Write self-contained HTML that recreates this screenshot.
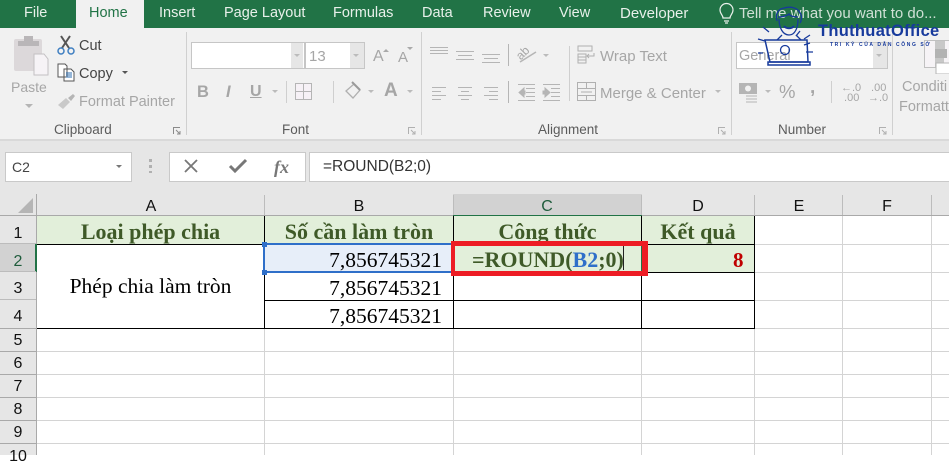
<!DOCTYPE html>
<html><head><meta charset="utf-8">
<style>
html,body{margin:0;padding:0}
body{width:949px;height:455px;overflow:hidden;position:relative;background:#fff;font-family:"Liberation Sans",sans-serif}
.a{position:absolute}
.t{position:absolute;white-space:nowrap;line-height:1}
.tab{top:6px;font-size:14.5px;color:#e8f0ea}
.g{color:#a6a6a6;font-size:14px}
.lbl{color:#5c5c5c;font-size:13.5px;top:123px}
.s{font-family:"Liberation Serif","Noto Serif CJK SC",serif;font-size:21px}
.hd{font-weight:bold;color:#3f5a28;font-size:22px;top:221px;text-align:center}
.num{color:#000;font-size:21.5px;text-align:right;width:180px;left:262px}
.col{top:199px;font-size:16px;color:#111;width:40px;text-align:center}
.row{left:0;width:36px;text-align:center;font-size:16px;color:#111}
</style></head><body>
<div class="a" style="left:0;top:0;width:949px;height:28px;background:#217346"></div>
<div class="a" style="left:76px;top:0;width:68px;height:28px;background:#f1f1f1"></div>
<div class="t tab" style="left:24px">File</div>
<div class="t tab" style="left:89px;color:#217346">Home</div>
<div class="t tab" style="left:159px">Insert</div>
<div class="t tab" style="left:224px">Page Layout</div>
<div class="t tab" style="left:333px">Formulas</div>
<div class="t tab" style="left:422px">Data</div>
<div class="t tab" style="left:483px">Review</div>
<div class="t tab" style="left:559px">View</div>
<div class="t tab" style="left:620px;font-size:15px">Developer</div>
<div class="t tab" style="left:739px;color:#cfe0d5;font-size:15px">Tell me what you want to do...</div>
<svg class="a" style="left:718px;top:2px" width="18" height="24" viewBox="0 0 18 24"><path d="M5 16c0-3-3-4-3-8a6.500 6.500 0 0 1 13 0c0 4-3 5-3 8zM6 19h5M7 21h3" fill="none" stroke="#e8f0ea" stroke-width="1.200"/></svg>

<!-- ribbon -->
<div class="a" style="left:0;top:28px;width:949px;height:111px;background:#f1f1f1"></div>
<div class="a" style="left:0;top:139px;width:949px;height:2px;background:#d9d9d9"></div>
<div class="a" style="left:0;top:141px;width:949px;height:53px;background:#e6e6e6"></div>
<div class="a" style="left:186px;top:32px;width:1px;height:103px;background:#d0d0d0"></div>
<div class="a" style="left:421px;top:32px;width:1px;height:103px;background:#d0d0d0"></div>
<div class="a" style="left:731px;top:32px;width:1px;height:103px;background:#d0d0d0"></div>
<div class="a" style="left:892px;top:32px;width:1px;height:103px;background:#d0d0d0"></div>

<!-- clipboard -->
<svg class="a" style="left:12px;top:34px" width="38" height="42" viewBox="0 0 38 42"><rect x="2" y="5" width="28" height="32" rx="2" fill="#dcd8da"/><rect x="12" y="2" width="9" height="6" fill="#b9b6b8"/><rect x="6" y="7" width="21" height="5" fill="#b9b6b8"/><path d="M22 20h10l4 5v16H22z" fill="#f6f3f6" stroke="#c3c0c3"/></svg>
<div class="t g" style="left:11px;top:80px;font-size:14px">Paste</div>
<div class="a" style="left:25px;top:104px;border:4px solid transparent;border-top-color:#b5b5b5"></div>
<svg class="a" style="left:56px;top:35px" width="20" height="20" viewBox="0 0 20 20"><path d="M5 1l8 12M14 1L6 13" stroke="#555" stroke-width="2" fill="none"/><circle cx="5" cy="16" r="3" fill="none" stroke="#3f7fc1" stroke-width="1.500"/><circle cx="15" cy="16" r="3" fill="none" stroke="#3f7fc1" stroke-width="1.500"/></svg>
<div class="t" style="left:79px;top:39px;font-size:14.500px;color:#444">Cut</div>
<svg class="a" style="left:57px;top:63px" width="18" height="19" viewBox="0 0 18 19"><path d="M1 1h7l2 2v11H1zM7 6h7l3 3v9H7z" fill="#fff" stroke="#555"/><path d="M9 10h6M9 12h6M9 14h6" stroke="#2b6cb0"/></svg>
<div class="t" style="left:79px;top:67px;font-size:14.500px;color:#444">Copy</div>
<div class="a" style="left:122px;top:71px;border:3.500px solid transparent;border-top-color:#555"></div>
<svg class="a" style="left:57px;top:93px" width="19" height="17" viewBox="0 0 19 17"><path d="M1 12l8-7 4 4-7 7z" fill="#c9c9c9"/><path d="M11 5l5-4 2 2-4 5z" fill="#b5b5b5"/></svg>
<div class="t g" style="left:79px;top:95px;font-size:14.500px">Format Painter</div>
<div class="t lbl" style="left:54px">Clipboard</div>
<svg class="a" style="left:173px;top:127px" width="8" height="8"><path d="M0.500 7V0.500H7M3 3l4 4M7 4v3H4" fill="none" stroke="#8a8a8a"/></svg>

<!-- font -->
<div class="a" style="left:191px;top:42px;width:112px;height:25px;border:1px solid #c6c6c6;background:#fff;box-sizing:content-box"></div>
<div class="a" style="left:291px;top:43px;width:12px;height:25px;background:#e6e6e6"></div>
<div class="a" style="left:294px;top:54px;border:3.500px solid transparent;border-top-color:#bbb"></div>
<div class="a" style="left:305px;top:42px;width:58px;height:25px;border:1px solid #c6c6c6;background:#fff"></div>
<div class="a" style="left:350px;top:43px;width:14px;height:25px;background:#e6e6e6"></div>
<div class="a" style="left:353px;top:54px;border:3.500px solid transparent;border-top-color:#bbb"></div>
<div class="t g" style="left:309px;top:49px;font-size:15px">13</div>
<div class="t" style="left:373px;top:49px;font-size:16px;color:#a6a6a6">A</div>
<div class="a" style="left:383px;top:46px;border:3px solid transparent;border-bottom-color:#aaa"></div>
<div class="t" style="left:398px;top:50px;font-size:15px;color:#a6a6a6">A</div>
<div class="a" style="left:407px;top:47px;border:3px solid transparent;border-top-color:#aaa"></div>
<div class="t" style="left:197px;top:84px;font-size:16.500px;font-weight:bold;color:#a6a6a6">B</div>
<div class="t" style="left:226px;top:84px;font-size:16.500px;font-weight:bold;font-style:italic;color:#a6a6a6">I</div>
<div class="t" style="left:250px;top:84px;font-size:16px;font-weight:bold;color:#a6a6a6;text-decoration:underline">U</div>
<div class="a" style="left:272px;top:90px;border:3px solid transparent;border-top-color:#bbb"></div>
<div class="a" style="left:286px;top:81px;width:1px;height:22px;background:#cfcfcf"></div>
<svg class="a" style="left:295px;top:83px" width="17" height="17"><path d="M0.500 0.500h16v16h-16zM8.500 0.500v16M0.500 8.500h16" fill="#f6f1f6" stroke="#b5b5b5"/></svg>
<div class="a" style="left:333px;top:81px;width:1px;height:22px;background:#cfcfcf"></div>
<svg class="a" style="left:344px;top:81px" width="20" height="20"><path d="M2 10l8-7 6 6-7 8z" fill="none" stroke="#b0b0b0" stroke-width="1.300"/><path d="M8 1l8 8" stroke="#9a9a9a" stroke-width="2"/></svg>
<div class="a" style="left:368px;top:90px;border:3px solid transparent;border-top-color:#bbb"></div>
<div class="t" style="left:384px;top:81px;font-size:19px;font-weight:bold;color:#a6a6a6">A</div>
<div class="a" style="left:407px;top:90px;border:3px solid transparent;border-top-color:#bbb"></div>
<div class="t lbl" style="left:282px">Font</div>
<svg class="a" style="left:408px;top:127px" width="8" height="8"><path d="M0.500 7V0.500H7M3 3l4 4M7 4v3H4" fill="none" stroke="#b0b0b0"/></svg>

<!-- alignment -->
<svg class="a" style="left:428px;top:44px" width="160" height="62" fill="none" stroke="#b5b5b5">
<path d="M2 3.500h18M2 6.500h18M2 9.500h18"/>
<path d="M28 7.500h18M30 11.500h14M28 15.500h18"/>
<path d="M54 10.500h18M56 14.500h14M54 18.500h18"/>
<path d="M4 43.500h14M4 47.500h9M4 51.500h14M4 55.500h9"/>
<path d="M30 43.500h14M33 47.500h8M30 51.500h14M33 55.500h8"/>
<path d="M56 43.500h14M61 47.500h9M56 51.500h14M61 55.500h9"/>
<path d="M80.500 0v22M80.500 37v22"/>
<path d="M92 18L108 8" stroke-width="1.500"/>
<path d="M90 40.500h17M98 44.500h9M98 48.500h9M98 52.500h9M90 56.500h17"/>
<path d="M96 44l-5 4.500 5 4.500v-3h1v-3h-1z" fill="#b5b5b5"/>
<path d="M115 40.500h17M123 44.500h9M123 48.500h9M123 52.500h9M115 56.500h17"/>
<path d="M117 44l5 4.500-5 4.500v-3h-2v-3h2z" fill="#b5b5b5"/>
</svg>
<div class="t" style="left:516px;top:47px;font-size:12px;color:#a6a6a6;transform:rotate(-45deg);transform-origin:50% 50%">ab</div>
<div class="a" style="left:543px;top:54px;border:3px solid transparent;border-top-color:#bbb"></div>
<div class="a" style="left:569px;top:46px;width:1px;height:55px;background:#cfcfcf"></div>
<svg class="a" style="left:577px;top:45px" width="20" height="20" fill="none" stroke="#b0b0b0"><path d="M1 1h14v5H1zM1 9h8v9H1zM1 12h8M1 15h8M10 11h7v-3M12 9l-2 2 2 2"/></svg>
<div class="t g" style="left:600px;top:49px;font-size:15px">Wrap Text</div>
<svg class="a" style="left:577px;top:82px" width="20" height="20" fill="none" stroke="#b0b0b0"><path d="M0.500 0.500h18v18h-18zM0.500 6.500h18M0.500 13.500h18M9.500 0.500v6M9.500 13.500v5M4 10h11"/></svg>
<div class="t g" style="left:600px;top:86px;font-size:15px">Merge &amp; Center</div>
<div class="a" style="left:715px;top:90px;border:3px solid transparent;border-top-color:#bbb"></div>
<div class="t lbl" style="left:538px">Alignment</div>
<svg class="a" style="left:718px;top:127px" width="8" height="8"><path d="M0.500 7V0.500H7M3 3l4 4M7 4v3H4" fill="none" stroke="#b0b0b0"/></svg>

<!-- number -->
<div class="a" style="left:736px;top:42px;width:150px;height:25px;border:1px solid #c6c6c6;background:#fff"></div>
<div class="a" style="left:873px;top:43px;width:14px;height:25px;background:#e6e6e6"></div>
<div class="a" style="left:876px;top:54px;border:3.500px solid transparent;border-top-color:#bbb"></div>
<div class="t g" style="left:739px;top:49px;font-size:14.500px">General</div>
<svg class="a" style="left:739px;top:83px" width="20" height="20"><rect x="0" y="0" width="18" height="11" fill="#b5b5b5"/><ellipse cx="9" cy="5.500" rx="3" ry="3" fill="#f1f1f1"/><path d="M7 13h11M7 16h11M7 19h11" stroke="#b5b5b5"/></svg>
<div class="a" style="left:765px;top:90px;border:3px solid transparent;border-top-color:#bbb"></div>
<div class="t" style="left:779px;top:83px;font-size:18.500px;color:#a6a6a6">%</div>
<div class="t" style="left:810px;top:78px;font-size:19px;font-weight:bold;color:#a6a6a6">,</div>
<div class="a" style="left:831px;top:81px;width:1px;height:22px;background:#cfcfcf"></div>
<div class="t" style="left:841px;top:83px;font-size:11px;color:#a6a6a6;line-height:10px;white-space:pre">←.0
 .00</div>
<div class="t" style="left:868px;top:83px;font-size:11px;color:#a6a6a6;line-height:10px;white-space:pre"> .00
→.0</div>
<div class="t lbl" style="left:778px">Number</div>
<svg class="a" style="left:879px;top:127px" width="8" height="8"><path d="M0.500 7V0.500H7M3 3l4 4M7 4v3H4" fill="none" stroke="#b0b0b0"/></svg>

<!-- styles -->
<svg class="a" style="left:924px;top:40px" width="25" height="34"><path d="M0.500 0.500h30v27h-30z" fill="#f6f3f6" stroke="#c0c0c0"/><rect x="11" y="1" width="10" height="8" fill="#c8c8c8"/><rect x="11" y="9" width="12" height="9" fill="#b3b3b3"/><rect x="11" y="18" width="9" height="9" fill="#c8c8c8"/><rect x="12" y="23" width="14" height="11" fill="#fff" stroke="#b5b5b5"/></svg>
<div class="t g" style="left:902px;top:80px;font-size:14.500px">Conditi</div>
<div class="t g" style="left:899px;top:100px;font-size:14.500px">Formatt</div>

<!-- watermark -->
<svg class="a" style="left:755px;top:5px" width="100" height="62" fill="none" stroke="#173a9c" stroke-width="1.300">
<path d="M22 16c-2-7 1-12 7-13 7-2 14 0 16 5 2 2 2 7 0 10M23 12c4 0 9-1 11-3 1 2 5 3 9 3M24 14c0 9 4 16 10 16s9-7 9-16"/>
<path d="M29 21c2 3 8 3 10 0" stroke-width="2"/>
<path d="M27 30l-5 5M41 30l5 5"/>
<path d="M8 22l6 5M3 34l7 2M45 26l-4 5M55 30l-6 4M55 38l-6 2M51 47h7M3 48h5"/>
<path d="M10 35h42l1 22H15z" stroke-width="1.500"/>
<path d="M13 57h42v3H13z" stroke-width="1.500"/>
<circle cx="30" cy="45" r="4.500"/>
</svg>
<div class="t" style="left:818px;top:23px;font-size:16.500px;font-weight:bold;color:#173a9c;letter-spacing:.3px">ThuthuatOffice</div>
<div class="t" style="left:830px;top:43px;font-size:5px;font-weight:bold;color:#173a9c;letter-spacing:1.600px">TRI KỶ CỦA DÂN CÔNG SỞ</div>

<!-- formula bar -->
<div class="a" style="left:5px;top:152px;width:125px;height:28px;border:1px solid #c9c9c9;background:#fff"></div>
<div class="t" style="left:12px;top:160px;font-size:14px;color:#444">C2</div>
<div class="a" style="left:116px;top:165px;border:3.500px solid transparent;border-top-color:#777"></div>
<div class="a" style="left:149px;top:159px;width:3px;height:14px;background:repeating-linear-gradient(#b0b0b0 0 3px,transparent 3px 6px)"></div>
<div class="a" style="left:169px;top:152px;width:135px;height:28px;border:1px solid #c9c9c9;background:#fff"></div>
<svg class="a" style="left:183px;top:158px" width="16" height="16"><path d="M2 2l12 12M14 2L2 14" stroke="#777" stroke-width="1.800"/></svg>
<svg class="a" style="left:228px;top:158px" width="20" height="16"><path d="M2 8l5 5L18 2" stroke="#777" stroke-width="3" fill="none"/></svg>
<div class="t" style="left:274px;top:158px;font-family:'Liberation Serif',serif;font-style:italic;font-size:18px;font-weight:bold;color:#777">fx</div>
<div class="a" style="left:309px;top:152px;width:640px;height:28px;border:1px solid #c9c9c9;border-right:0;background:#fff"></div>
<div class="t" style="left:323px;top:159px;font-size:15.500px;color:#333">=ROUND(B2;0)</div>

<!-- headers -->
<div class="a" style="left:0;top:194px;width:949px;height:22px;background:#e6e6e6"></div>
<div class="a" style="left:0;top:215px;width:949px;height:1px;background:#a9a9a9"></div>
<div class="a" style="left:453px;top:194px;width:189px;height:21px;background:#d2d2d2"></div>
<div class="a" style="left:453px;top:215px;width:189px;height:2px;background:#217346"></div>
<div class="a" style="left:0;top:216px;width:36px;height:239px;background:#e6e6e6"></div>
<div class="a" style="left:36px;top:194px;width:1px;height:261px;background:#a9a9a9"></div>
<div class="a" style="left:0;top:244px;width:36px;height:28px;background:#d2d2d2"></div>
<div class="a" style="left:35px;top:244px;width:2px;height:28px;background:#217346"></div>
<svg class="a" style="left:17px;top:197px" width="17" height="17"><path d="M16 1v15H1z" fill="#b5b5b5"/></svg>
<div class="a" style="left:264px;top:195px;width:1px;height:20px;background:#bcbcbc"></div>
<div class="a" style="left:453px;top:195px;width:1px;height:20px;background:#bcbcbc"></div>
<div class="a" style="left:641px;top:195px;width:1px;height:20px;background:#bcbcbc"></div>
<div class="a" style="left:754px;top:195px;width:1px;height:20px;background:#bcbcbc"></div>
<div class="a" style="left:842px;top:195px;width:1px;height:20px;background:#bcbcbc"></div>
<div class="a" style="left:931px;top:195px;width:1px;height:20px;background:#bcbcbc"></div>
<div class="t col" style="left:131px">A</div>
<div class="t col" style="left:339px">B</div>
<div class="t col" style="left:527px;color:#1f5c3c">C</div>
<div class="t col" style="left:678px">D</div>
<div class="t col" style="left:779px">E</div>
<div class="t col" style="left:867px">F</div>
<div class="t row" style="top:226px">1</div>
<div class="t row" style="top:254px;color:#1f5c3c">2</div>
<div class="t row" style="top:281px">3</div>
<div class="t row" style="top:309px">4</div>
<div class="t row" style="top:333px">5</div>
<div class="t row" style="top:356px">6</div>
<div class="t row" style="top:379px">7</div>
<div class="t row" style="top:402px">8</div>
<div class="t row" style="top:425px">9</div>
<div class="t row" style="top:449px">10</div>
<div class="a" style="left:0;top:243px;width:36px;height:1px;background:#bcbcbc"></div>
<div class="a" style="left:0;top:271px;width:36px;height:1px;background:#bcbcbc"></div>
<div class="a" style="left:0;top:299px;width:36px;height:1px;background:#bcbcbc"></div>
<div class="a" style="left:0;top:328px;width:36px;height:1px;background:#a9a9a9"></div>
<div class="a" style="left:0;top:351px;width:36px;height:1px;background:#a9a9a9"></div>
<div class="a" style="left:0;top:374px;width:36px;height:1px;background:#a9a9a9"></div>
<div class="a" style="left:0;top:397px;width:36px;height:1px;background:#a9a9a9"></div>
<div class="a" style="left:0;top:420px;width:36px;height:1px;background:#a9a9a9"></div>
<div class="a" style="left:0;top:443px;width:36px;height:1px;background:#a9a9a9"></div>

<!-- grid light -->
<div class="a" style="left:37px;top:351px;width:912px;height:1px;background:#d4d4d4"></div>
<div class="a" style="left:37px;top:374px;width:912px;height:1px;background:#d4d4d4"></div>
<div class="a" style="left:37px;top:397px;width:912px;height:1px;background:#d4d4d4"></div>
<div class="a" style="left:37px;top:420px;width:912px;height:1px;background:#d4d4d4"></div>
<div class="a" style="left:37px;top:443px;width:912px;height:1px;background:#d4d4d4"></div>
<div class="a" style="left:755px;top:244px;width:194px;height:1px;background:#d4d4d4"></div>
<div class="a" style="left:755px;top:272px;width:194px;height:1px;background:#d4d4d4"></div>
<div class="a" style="left:755px;top:300px;width:194px;height:1px;background:#d4d4d4"></div>
<div class="a" style="left:37px;top:328px;width:912px;height:1px;background:#d4d4d4"></div>
<div class="a" style="left:264px;top:329px;width:1px;height:126px;background:#d4d4d4"></div>
<div class="a" style="left:453px;top:329px;width:1px;height:126px;background:#d4d4d4"></div>
<div class="a" style="left:641px;top:329px;width:1px;height:126px;background:#d4d4d4"></div>
<div class="a" style="left:754px;top:329px;width:1px;height:126px;background:#d4d4d4"></div>
<div class="a" style="left:842px;top:216px;width:1px;height:239px;background:#d4d4d4"></div>
<div class="a" style="left:931px;top:216px;width:1px;height:239px;background:#d4d4d4"></div>

<!-- fills -->
<div class="a" style="left:37px;top:216px;width:717px;height:28px;background:#e2efda"></div>
<div class="a" style="left:265px;top:244px;width:188px;height:28px;background:#e7eef9"></div>
<div class="a" style="left:454px;top:244px;width:300px;height:28px;background:#e2efda"></div>

<!-- black borders -->
<div class="a" style="left:37px;top:244px;width:718px;height:1px;background:#000"></div>
<div class="a" style="left:265px;top:272px;width:490px;height:1px;background:#000"></div>
<div class="a" style="left:265px;top:300px;width:490px;height:1px;background:#000"></div>
<div class="a" style="left:37px;top:328px;width:718px;height:1px;background:#000"></div>
<div class="a" style="left:264px;top:216px;width:1px;height:113px;background:#000"></div>
<div class="a" style="left:453px;top:216px;width:1px;height:113px;background:#000"></div>
<div class="a" style="left:641px;top:216px;width:1px;height:113px;background:#000"></div>
<div class="a" style="left:754px;top:216px;width:1px;height:113px;background:#000"></div>

<!-- cell text -->
<div class="t s hd" style="left:37px;width:227px">Loại phép chia</div>
<div class="t s hd" style="left:265px;width:188px">Số cần làm tròn</div>
<div class="t s hd" style="left:454px;width:187px">Công thức</div>
<div class="t s hd" style="left:642px;width:112px">Kết quả</div>
<div class="t s" style="left:37px;width:227px;top:276px;text-align:center;color:#000;font-size:21.500px">Phép chia làm tròn</div>
<div class="t s num" style="top:250px">7,856745321</div>
<div class="t s num" style="top:278px">7,856745321</div>
<div class="t s num" style="top:306px">7,856745321</div>
<div class="t s" style="left:472px;top:249px;font-size:22px;font-weight:bold;color:#3f5a28">=ROUND(<span style="color:#2f6fc9">B2</span>;0)</div>
<div class="a" style="left:623px;top:245px;width:1px;height:25px;background:#222"></div>
<div class="t s" style="left:733px;top:250px;font-size:21px;font-weight:bold;color:#c00000">8</div>

<!-- selection of B2 -->
<div class="a" style="left:264px;top:243px;width:189px;height:2px;background:#2f6fc9"></div>
<div class="a" style="left:264px;top:271px;width:189px;height:2px;background:#2f6fc9"></div>
<div class="a" style="left:263px;top:243px;width:2px;height:30px;background:#2f6fc9"></div>
<div class="a" style="left:262px;top:242px;width:5px;height:5px;background:#2f6fc9;border:0"></div>
<div class="a" style="left:262px;top:270px;width:5px;height:5px;background:#2f6fc9"></div>
<!-- C2 active right edge -->
<div class="a" style="left:641px;top:245px;width:2px;height:26px;background:#217346"></div>
<!-- red rect -->
<div class="a" style="left:451px;top:241px;width:197px;height:35px;box-sizing:border-box;border:solid #ed1c24;border-width:5px 6px 5px 4px"></div>
</body></html>
